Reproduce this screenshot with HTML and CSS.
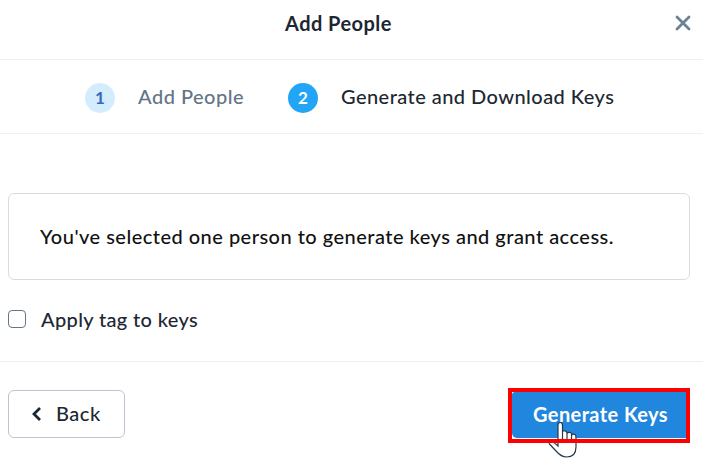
FILE: index.html
```html
<!DOCTYPE html>
<html lang="en">
<head>
<meta charset="utf-8">
<title>Add People</title>
<link rel="stylesheet" href="styles.css">
</head>
<body>
<main class="dialog">
  <header class="header">
    <h1 class="title"><span>Add People</span></h1>
    <svg class="close" width="16" height="16" viewBox="0 0 16 16"><path d="M2 2 14 14M14 2 2 14"/></svg>
  </header>
  <nav class="steps">
    <span class="badge badge-done">1</span><span class="label label-done">Add People</span>
    <span class="badge badge-current">2</span><span class="label label-current">Generate and Download Keys</span>
  </nav>
  <section class="content">
    <div class="message"><span class="message-text">You've selected one person to generate keys and grant access.</span></div>
    <label class="option"><span class="checkbox"></span><span class="option-text">Apply tag to keys</span></label>
  </section>
  <footer class="footer">
    <button class="back"><svg width="11" height="16" viewBox="0 0 11 16"><path d="M9 2 3 8l6 6"/></svg><span class="back-text">Back</span></button>
    <div class="action">
      <button class="generate"><span class="generate-text">Generate Keys</span></button>
      <svg class="cursor" width="30" height="38" viewBox="0 0 30 38"><path d="M10 24V4Q10 1.500 12.200 1.500T14.500 4V15V11Q15 9.500 17 9.800T19 12V16V12.500Q20 11 22 11.500T23.500 14V17V14Q25 12.500 27 13.500Q28 14 28 17V26C28 33 24 36 18.500 36C14 36 11.500 34 8 30L1.500 23C0 21 2 19.500 4 20.500Q7 22 10 25ZM14.500 15V19M19 16V20M23.500 17V20"/></svg>
      <div class="highlight"></div>
    </div>
  </footer>
</main>
</body>
</html>
```
FILE: styles.css
```css
* { box-sizing: border-box; }
body { margin: 0; background: #fff; color: #1d2732; font: 500 20px/24px Lato, "Liberation Sans", sans-serif; }
.dialog { width: 703px; height: 458px; display: flex; flex-direction: column; }
.header { height: 60px; border-bottom: 1px solid #eff0f2; display: grid; grid-template-columns: 285px 1fr 16px; padding: 11px 12px 0 0; }
.title { grid-column: 2; margin: 0; font: inherit; font-weight: 700; letter-spacing: .45px; white-space: nowrap; }
.close { margin-top: 4px; fill: none; stroke: #6c8193; stroke-width: 2.800; stroke-linecap: round; }
.steps { height: 74px; border-bottom: 1px solid #eff0f2; display: flex; align-items: center; padding: 2px 0 0 85px; white-space: nowrap; }
.badge { width: 30px; height: 30px; border-radius: 50%; display: grid; place-items: center; font-size: 17px; font-weight: 700; flex: none; }
.badge-done { background: #d3edfd; color: #3268c4; }
.badge-current { background: #23a5f7; color: #fff; }
.label { margin-left: 23px; padding-bottom: 3px; }
.label-done { width: 150px; color: #637587; letter-spacing: .5px; }
.label-current { letter-spacing: .45px; }
.content { height: 228px; border-bottom: 1px solid #eff0f2; padding: 59px 13px 0 8px; }
.message { height: 87px; border: 1px solid #d8dce2; border-radius: 6px; display: flex; align-items: center; padding-left: 31px; color: #111; white-space: nowrap; }
.message-text { padding-bottom: 2px; letter-spacing: .48px; }
.option { display: flex; align-items: center; gap: 15px; margin-top: 27px; }
.checkbox { width: 18px; height: 18px; border: 1px solid #65758b; border-radius: 4px; }
.option-text { letter-spacing: .35px; }
.footer { display: flex; justify-content: space-between; padding: 28px 13px 0 8px; }
button { font: inherit; color: inherit; white-space: nowrap; }
.back { width: 117px; height: 48px; display: flex; align-items: center; gap: 14px; padding: 0 0 0 22px; background: #fff; border: 1px solid #bdc4d1; border-radius: 6px; }
.back svg { fill: none; stroke: #1d2732; stroke-width: 2.800; }
.back-text { padding-bottom: 2px; letter-spacing: .5px; }
.action { position: relative; width: 182px; height: 55px; margin-top: -2px; padding: 4px; }
.generate { width: 174px; height: 46px; display: block; padding: 0 0 2px 21px; text-align: left; border: 0; border-radius: 3px 0 0 5px; background: #2186dd; color: #fff; font-weight: 700; }
.generate-text { letter-spacing: .4px; }
.cursor { position: absolute; left: 40px; top: 33px; fill: #fff; stroke: #26384c; stroke-width: 1.200; }
.highlight { position: absolute; inset: 0; border: 4px solid #f00; }
```
